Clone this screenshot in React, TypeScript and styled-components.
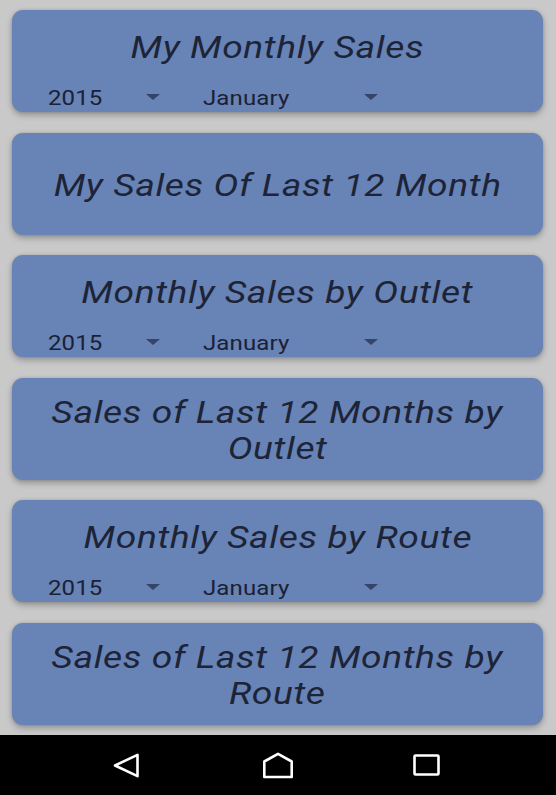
import React from "react";
import styled, { createGlobalStyle } from "styled-components";

const Global = createGlobalStyle`
  html, body { margin: 0; padding: 0; }
  body { background: #c9c9c9; font-family: Roboto, "Noto Sans", sans-serif; }
`;

const Screen = styled.div`
  width: 556px;
  height: 795px;
  display: flex;
  flex-direction: column;
  background: #c9c9c9;
  overflow: hidden;
`;

const List = styled.div`
  flex: 1;
  display: flex;
  flex-direction: column;
  gap: 20.6px;
  padding: 10px 13px 0 12px;
  overflow: hidden;
`;

const Card = styled.div<{ $centered?: boolean }>`
  height: 102px;
  flex-shrink: 0;
  box-sizing: border-box;
  background: #6883b5;
  border-radius: 11px;
  box-shadow: 0 3px 6px rgba(0, 0, 0, 0.28), 0 0 3px rgba(0, 0, 0, 0.12);
  display: flex;
  flex-direction: column;
  justify-content: ${(p) => (p.$centered ? "center" : "flex-start")};
  padding-top: ${(p) => (p.$centered ? "5px" : "20px")};
  overflow: hidden;
`;

const Title = styled.div`
  font-family: Roboto, sans-serif;
  font-style: italic;
  font-size: 31px;
  line-height: 36px;
  letter-spacing: 0.5px;
  color: #1d2438;
  text-align: center;
  padding: 0 10px;
`;

const Wide = styled.span<{ $origin?: string }>`
  display: inline-block;
  transform: scaleX(1.2);
  transform-origin: ${(p) => p.$origin || "center"};
`;

const Row = styled.div`
  display: flex;
  align-items: center;
  gap: 43px;
  padding-left: 36px;
  margin-top: 20px;
`;

const Dropdown = styled.div<{ $w: number }>`
  width: ${(p) => p.$w}px;
  height: 24px;
  display: flex;
  align-items: center;
  justify-content: space-between;
  font-family: Roboto, sans-serif;
  font-size: 20px;
  letter-spacing: 0.1px;
  color: #1a2136;
`;

const Arrow = styled.span`
  width: 0;
  height: 0;
  border-left: 7.5px solid transparent;
  border-right: 7.5px solid transparent;
  border-top: 6px solid #34446a;
  margin-top: -3px;
`;

const NavBar = styled.div`
  height: 60px;
  flex-shrink: 0;
  background: #000;
  display: flex;
  align-items: center;
  justify-content: center;
  gap: 88px;
`;

const NavSlot = styled.div`
  width: 60px;
  height: 30px;
  display: flex;
  align-items: center;
  justify-content: center;
`;

type CardData = { title: string[]; dropdowns?: boolean };

const cards: CardData[] = [
  { title: ["My Monthly Sales"], dropdowns: true },
  { title: ["My Sales Of Last 12 Month"] },
  { title: ["Monthly Sales by Outlet"], dropdowns: true },
  { title: ["Sales of Last 12 Months by", "Outlet"] },
  { title: ["Monthly Sales by Route"], dropdowns: true },
  { title: ["Sales of Last 12 Months by", "Route"] },
];

export default function App() {
  return (
    <>
      <Global />
      <Screen>
        <List>
          {cards.map((c, i) => (
            <Card key={i} $centered={!c.dropdowns}>
              {c.title.map((line, j) => (
                <Title key={j}>
                  <Wide>{line}</Wide>
                </Title>
              ))}
              {c.dropdowns && (
                <Row>
                  <Dropdown $w={112}>
                    <Wide $origin="left">2015</Wide>
                    <Arrow />
                  </Dropdown>
                  <Dropdown $w={175}>
                    <Wide $origin="left">January</Wide>
                    <Arrow />
                  </Dropdown>
                </Row>
              )}
            </Card>
          ))}
        </List>
        <NavBar>
          <NavSlot>
            <svg width="27" height="25" viewBox="0 0 27 25" style={{ marginLeft: -8 }}>
              <path d="M2 12.5 L24.5 1.8 L24.5 23.2 Z" fill="none" stroke="#fff" strokeWidth="2.6" strokeLinejoin="round" />
            </svg>
          </NavSlot>
          <NavSlot>
            <svg width="32" height="27" viewBox="0 0 32 27">
              <path d="M2.3 9.5 L16 1.8 L29.7 9.5 L29.7 25 L2.3 25 Z" fill="none" stroke="#fff" strokeWidth="2.6" strokeLinejoin="round" />
            </svg>
          </NavSlot>
          <NavSlot>
            <svg width="27" height="22" viewBox="0 0 27 22">
              <rect x="1.5" y="1.5" width="24" height="19" rx="1" fill="none" stroke="#fff" strokeWidth="2.6" />
            </svg>
          </NavSlot>
        </NavBar>
      </Screen>
    </>
  );
}
